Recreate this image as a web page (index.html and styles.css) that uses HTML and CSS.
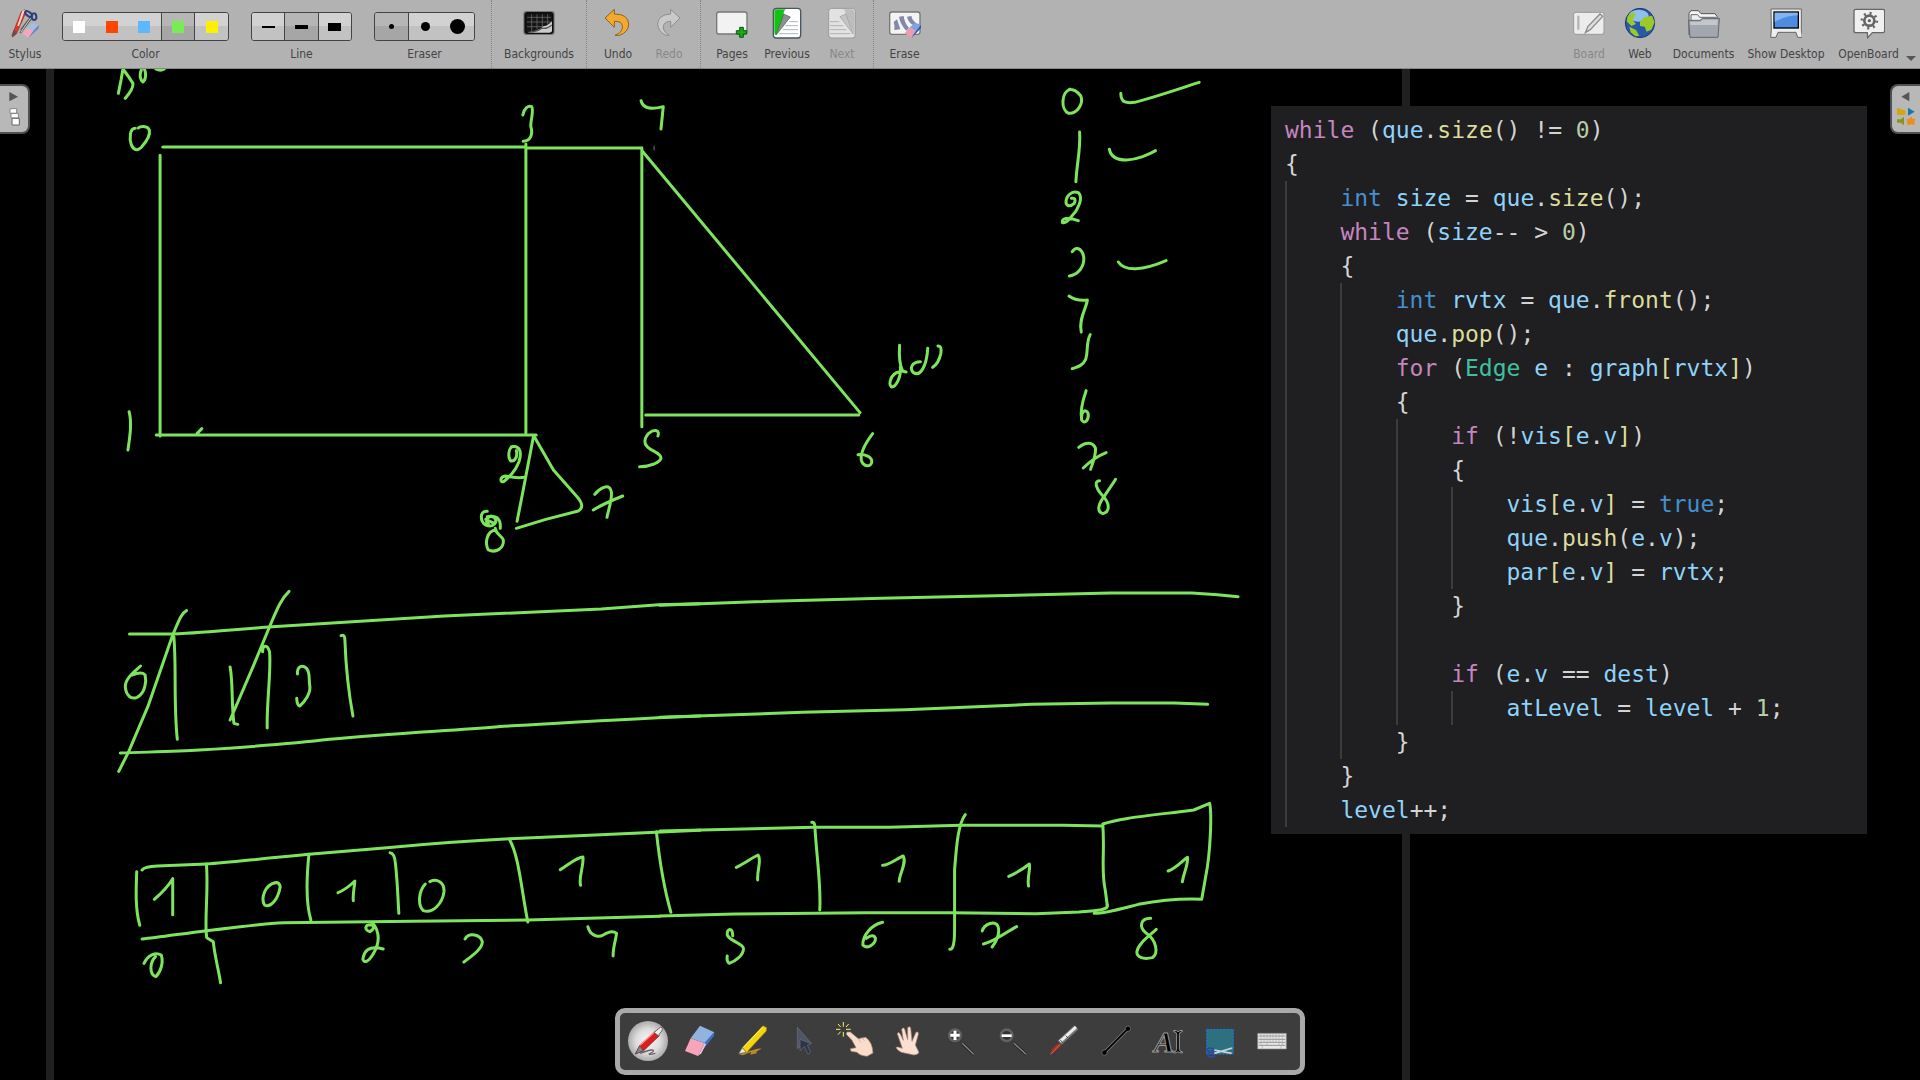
FILE: index.html
```html
<!DOCTYPE html>
<html lang="en">
<head>
<meta charset="utf-8">
<meta name="viewport" content="width=device-width, initial-scale=1">
<title>OpenBoard</title>
<link rel="stylesheet" href="styles.css">
</head>
<body>
<header class="toolbar">
  <button class="tool tool-stylus"><svg class="icon" viewBox="29 21 96 96"><path d="M38 106L66 35l10-6 5 5-30 68-12 9z" fill="#e33a28" stroke="#a32218" stroke-width="2"/><path d="M38 106l5-16 9 5-7 12z" fill="#555"/><path d="M69 32l8-3-18 50-5-2z" fill="#f4d4d0"/><path d="M62 99l36-47M65 90L98 47" stroke="#566050" stroke-width="6"/><path d="M64 97l30-43" stroke="#c8d0c4" stroke-width="3"/><ellipse cx="88" cy="42" rx="12" ry="6" transform="rotate(35 88 42)" fill="none" stroke="#2b3f80" stroke-width="6"/><ellipse cx="104" cy="50" rx="10" ry="7" transform="rotate(80 104 50)" fill="none" stroke="#2b3f80" stroke-width="6"/><path d="M70 101l12-18 20 10-15 21z" fill="#f5a6bd"/><path d="M82 83l16-13 21 4-17 19z" fill="#a6bede"/><path d="M102 93l17-19-2 12-30 28z" fill="#5f88c9"/></svg><span>Stylus</span></button>

  <div class="field" role="group" aria-label="Color">
    <div class="segments segments-five">
      <button aria-label="White"><i class="swatch white"></i></button><button aria-label="Red"><i class="swatch red"></i></button><button aria-label="Blue"><i class="swatch blue"></i></button><button class="on" aria-label="Green" aria-pressed="true"><i class="swatch green"></i></button><button aria-label="Yellow"><i class="swatch yellow"></i></button>
    </div>
    <span>Color</span>
  </div>
  <div class="field" role="group" aria-label="Line">
    <div class="segments">
      <button aria-label="Fine line"><i class="stroke fine"></i></button><button class="on" aria-label="Medium line" aria-pressed="true"><i class="stroke medium"></i></button><button aria-label="Strong line"><i class="stroke strong"></i></button>
    </div>
    <span>Line</span>
  </div>
  <div class="field" role="group" aria-label="Eraser">
    <div class="segments">
      <button class="on" aria-label="Small eraser" aria-pressed="true"><i class="dot small"></i></button><button aria-label="Medium eraser"><i class="dot mid"></i></button><button aria-label="Large eraser"><i class="dot large"></i></button>
    </div>
    <span>Eraser</span>
  </div>

  <div class="section section-backgrounds">
    <button class="tool"><svg class="icon" viewBox="129 21 96 96"><rect x="130" y="33" width="94" height="72" rx="9" fill="#777"/><rect x="135" y="38" width="84" height="62" rx="5" fill="#151515" stroke="#000" stroke-width="3"/><path d="M141 52h72M141 66h72M141 80h60M155 43v52M171 43v45M187 43v40M203 43v30" stroke="#777" stroke-width="2"/><path d="M142 98q36-6 50-20 8 2 24-14v30q-3 4-8 4z" fill="#ccc"/><path d="M145 97q30-2 40-12 18 2 30-10" stroke="#555" stroke-width="4" fill="none"/></svg><span>Backgrounds</span></button>
  </div>
  <div class="section section-history">
    <button class="tool"><svg class="icon" viewBox="366 21 96 96"><path d="M375 54l28-26v14q42 0 43 30 0 25-28 34h-13q25-10 22-29-2-14-24-13v18z" fill="#f4a82c" stroke="#8a651d" stroke-width="3"/></svg><span>Undo</span></button>
    <button class="tool" disabled><svg class="icon" viewBox="516 21 96 96"><path d="M597 54l-28-26v14q-38 2-39 30 1 23 25 34h10q-20-12-18-27 2-15 22-15v18z" fill="#c9c9c9" stroke="#8e8e8e" stroke-width="3"/></svg><span>Redo</span></button>
  </div>
  <div class="section section-pages">
    <button class="tool"><svg class="icon" viewBox="708 21 96 96"><rect x="710" y="36" width="91" height="66" rx="7" fill="#f2f2f2" stroke="#777" stroke-width="4"/><path d="M779 82h11v10h10v10h-10v10h-11v-10h-10V92h10z" fill="#18a818" stroke="#075d0b" stroke-width="3"/></svg><span>Pages</span></button>
    <button class="tool"><svg class="icon" viewBox="873 21 96 96"><rect x="880" y="25" width="82" height="89" rx="9" fill="#fff" stroke="#4b565f" stroke-width="4"/><path d="M883 28h36q-10 2-8 20l-23 58q-5-2-5-8z" fill="#13c313"/><path d="M911 42l20 9-42 53z" fill="#8b9290" stroke="#4d5755" stroke-width="2"/><path d="M928 65h26M916 77h38M908 89h46M897 101h57" stroke="#85939a" stroke-width="2"/></svg><span>Previous</span></button>
    <button class="tool" disabled><svg class="icon" viewBox="1038 21 96 96"><rect x="1046" y="25" width="80" height="89" rx="9" fill="#e2e2e2" stroke="#999" stroke-width="3"/><path d="M1088 28h28q8 2 8 10v66l-28-58q3-16-8-18z" fill="#bdbdbd"/><path d="M1080 50l17-8 23 61z" fill="#c5c5c5" stroke="#999" stroke-width="2"/><path d="M1050 65h28M1050 77h40M1050 89h49M1050 101h61" stroke="#999" stroke-width="2"/></svg><span>Next</span></button>
  </div>
  <div class="section section-erase">
    <button class="tool"><svg class="icon" viewBox="1228 21 96 96"><rect x="1230" y="36" width="91" height="67" rx="7" fill="#f4f4f4" stroke="#777" stroke-width="4"/><path d="M1242 66q4 12 2 24l18-2-10-30zM1258 50q4 24 22 42l8-8q-14-16-16-36zM1282 50q4 18 20 26l6-8q-14-12-12-20z" fill="#8289a8"/><path d="M1275 100l15-18 18 12-13 21z" fill="#f09ab0"/><path d="M1290 82l18-14 16 6-16 20z" fill="#86a0dc"/><path d="M1308 94l16-20v10l-29 31z" fill="#2b58b5"/></svg><span>Erase</span></button>
  </div>

  <nav class="modes" aria-label="Modes">
    <button class="tool mode-board" disabled><svg class="icon" viewBox="99 21 96 96"><rect x="101" y="37" width="91" height="66" rx="7" fill="#ececec" stroke="#999" stroke-width="3"/><path d="M115 47v42" stroke="#b5b5b5" stroke-width="7"/><path d="M136 98l8-19 36-37 8 7-37 40z" fill="#ddd" stroke="#8c8c8c" stroke-width="4"/></svg><span>Board</span></button>
    <button class="tool mode-web"><svg class="icon" viewBox="252 21 96 96"><circle cx="300" cy="69" r="44" fill="#2858a8" stroke="#1d3868" stroke-width="3"/><ellipse cx="296" cy="47" rx="30" ry="18" fill="#8fc0ec"/><path d="M263 48l16-12 8 8-9 16 10 12-14 6-14-14zM300 65l14-14 22-4 8 20-10 22-14 6-6-15-14-2zM268 80l20 10 10 17-12 2-14-12z" fill="#9ac928"/></svg><span>Web</span></button>
    <button class="tool mode-documents"><svg class="icon" viewBox="441 21 96 96"><path d="M444 104V40l6-8h22l8 9h42l6 8v53z" fill="#f5f5f5" stroke="#555" stroke-width="3"/><path d="M450 105V44h20l6 8h48v50" fill="#eee" stroke="#666" stroke-width="3"/><path d="M443 61h34l7-6h51l-4 57h-84z" fill="#a2a6ae" stroke="#62666d" stroke-width="3"/><path d="M447 65h32l7-6h44l-1 16h-81z" fill="#c4c7ce"/></svg><span>Documents</span></button>
    <button class="tool mode-desktop"><svg class="icon" viewBox="690 21 96 96"><path d="M693 27h91v62l3 23h-14l-5-15h-54l-6 15h-16l2-23z" fill="#eee" stroke="#666" stroke-width="3"/><rect x="702" y="36" width="73" height="48" fill="#4d8ce0" stroke="#000" stroke-width="4"/><path d="M704 66V38h69v8q-40 2-69 20z" fill="#83b4f0"/></svg><span>Show Desktop</span></button>
    <button class="tool mode-openboard"><svg class="icon" viewBox="938 21 96 96"><path d="M947 28h80q6 0 6 6v58q0 6-6 6h-31l-14 15-1-15h-34q-6 0-6-6V34q0-6 6-6z" fill="#f0f0f0" stroke="#666" stroke-width="4"/><circle cx="987" cy="62" r="15" fill="none" stroke="#666" stroke-width="8"/><circle cx="987" cy="62" r="22" fill="none" stroke="#666" stroke-width="9" stroke-dasharray="6 11.28"/><circle cx="987" cy="62" r="5" fill="#666"/></svg><span>OpenBoard</span></button>
    <svg class="more" viewBox="0 0 10 6"><path d="M0 0h10L5 5z" fill="#555"/></svg>
  </nav>
</header>

<main class="board">
  <div class="page-edge edge-left"></div>
  <div class="page-edge edge-right"></div>

  <svg class="ink" role="img" aria-label="Graph sketch with vertices 0 to 8, a queue and a visited array">
    <g transform="matrix(.38265 0 0 .33333 100 -9)">
      <path d="M60 27L55 60 48 100M62 30Q75 50 86 70Q88 85 66 115M108 30C102 45 106 62 112 66C120 60 121 40 116 27M146 27Q158 34 168 27"/>
      <path d="M92 205C78 205 76 235 82 255C90 275 100 270 108 262C125 240 132 225 129 210C124 196 105 198 100 204"/>
      <path d="M164 261H1113M1113 264H1416M157 286V1128M147 1125H1140M1113 252V1118M1416 263V1100M254 1120l12-14"/>
      <path d="M1105 165C1108 145 1120 135 1128 140C1135 150 1124 185 1126 200C1132 225 1125 242 1106 244"/>
      <path d="M1414 122C1418 145 1440 150 1472 140L1466 207"/>
      <path class="faint" d="M1448 258v12"/>
      <path d="M76 1055C84 1090 78 1130 73 1170"/>
      <path d="M1458 1128C1464 1112 1450 1105 1434 1120C1415 1145 1425 1160 1445 1172C1475 1190 1470 1200 1448 1212Q1430 1220 1410 1220"/>
      <path d="M1078 1160C1066 1165 1066 1195 1074 1203C1084 1205 1092 1190 1088 1172M1075 1160C1100 1155 1102 1180 1095 1205C1085 1235 1070 1250 1055 1265C1045 1268 1044 1250 1060 1248Q1085 1255 1110 1252"/>
      <path d="M1133 1128L1106 1290L1090 1384M1135 1130L1185 1230L1245 1308Q1270 1340 1250 1353L1165 1378L1088 1405"/>
      <path d="M1293 1303C1305 1285 1330 1270 1335 1290C1342 1310 1328 1350 1325 1372M1289 1350C1310 1335 1340 1320 1366 1308"/>
      <path d="M1012 1354C990 1352 994 1385 1008 1395C1030 1405 1040 1385 1030 1372C1015 1362 1003 1385 1015 1392M1012 1370C1040 1365 1048 1380 1046 1405M1035 1410C1010 1412 1005 1450 1015 1470C1035 1480 1056 1465 1054 1440C1050 1425 1035 1425 1033 1405M1008 1378L1030 1390"/>
    </g>
    <g transform="matrix(.40816 0 0 .33333 600 -9)">
      <path d="M105 275L637 1058M112 1065H634"/>
      <path d="M668 1121C650 1150 638 1180 640 1200C645 1222 665 1222 666 1205C666 1190 650 1182 632 1184"/>
      <path d="M734 856C732 890 734 915 742 934L750 936M736 920C738 950 726 982 714 981C706 972 712 942 732 936M785 905C765 905 757 925 768 938C785 950 800 920 803 865M828 858Q838 856 835 880Q830 910 815 922"/>
      <path d="M1152 88C1130 95 1128 150 1148 160C1170 162 1185 130 1178 108C1170 95 1160 88 1150 88M1276 100C1276 128 1288 130 1310 127C1350 115 1410 90 1468 67"/>
      <path d="M1175 216C1178 270 1168 310 1166 365M1248 268C1252 292 1268 300 1290 300C1320 298 1340 285 1361 272"/>
      <path d="M1155 415Q1168 412 1162 430Q1148 445 1142 430C1140 410 1155 390 1172 398C1182 410 1175 435 1165 455C1150 475 1145 490 1133 488C1130 475 1145 470 1172 482"/>
      <path d="M1157 575C1165 560 1180 562 1185 590C1188 620 1170 645 1150 648M1270 606C1285 635 1330 632 1387 602"/>
      <path d="M1149 708C1165 722 1180 722 1194 720C1192 745 1172 775 1179 816M1201 824C1190 850 1197 870 1190 898C1182 918 1170 920 1157 926"/>
      <path d="M1191 992C1180 1030 1177 1060 1180 1080C1188 1095 1198 1080 1196 1060C1190 1045 1180 1055 1180 1070"/>
      <path d="M1173 1162C1190 1145 1208 1145 1214 1165C1215 1190 1205 1215 1202 1228M1184 1224C1200 1205 1220 1188 1240 1178"/>
      <path d="M1224 1262C1210 1262 1215 1285 1230 1305C1250 1330 1250 1355 1232 1361C1215 1355 1222 1330 1236 1308C1245 1290 1255 1275 1263 1258"/>
    </g>
    <g transform="matrix(.38265 0 0 .33333 100 501)">
      <path d="M77 192H190C280 188 340 180 440 171C600 160 750 148 900 138L1310 117L1460 104L1568 101M53 549C120 546 200 545 260 540C400 530 500 522 600 508C760 490 900 483 1040 470C1200 460 1400 445 1568 438"/>
      <path d="M226 122C212 130 205 155 190 195L125 410L75 545L49 604M193 200C200 290 192 400 202 508"/>
      <path d="M106 288C90 305 66 325 66 350C68 375 80 390 97 382C118 370 122 335 118 315C110 305 95 310 85 315"/>
      <path d="M494 64C475 85 465 110 445 165L400 290L340 450M340 291C348 340 343 400 350 460l10 3M425 245C425 225 437 222 443 245C448 300 435 400 437 474"/>
      <path d="M516 312C515 285 530 285 540 295C550 310 545 325 548 345C552 370 535 395 522 408Q515 405 514 385M630 197Q640 192 640 210C643 310 650 370 661 438"/>
      <path d="M110 900Q115 890 150 888L278 882C340 878 400 868 546 853L750 833C850 822 1000 810 1070 806L1250 797L1568 781M110 1107C150 1103 220 1090 278 1082C350 1075 420 1060 480 1058C700 1055 900 1053 1118 1050L1463 1039"/>
      <path d="M96 905C94 960 92 1020 104 1066M278 882C284 960 272 1060 279 1103L296 1115C300 1160 310 1200 315 1238M546 853C540 920 538 1000 551 1050M758 848Q770 850 772 880C778 940 778 980 781 1030M1070 808C1095 860 1100 950 1118 1056M1454 785C1462 870 1475 960 1492 1027"/>
      <path d="M142 988C160 970 175 955 190 926V1034M458 938C430 945 420 985 430 1005C445 1015 465 990 471 950Q468 935 456 938M622 968C640 960 655 945 666 933C665 950 660 975 662 992"/>
      <path d="M850 942C832 965 830 1005 845 1022C870 1032 895 1000 899 965C900 935 880 925 862 935M1203 899C1225 885 1240 865 1262 861C1265 890 1250 920 1256 946"/>
      <path d="M115 1180C125 1155 145 1145 160 1155C166 1175 160 1205 146 1220C130 1215 128 1180 145 1160M715 1065C690 1060 690 1080 705 1085C720 1075 715 1062 708 1065M715 1062C732 1090 730 1120 715 1150C700 1180 690 1178 687 1168C690 1145 700 1125 740 1137"/>
      <path d="M954 1107C965 1085 995 1095 999 1115C1000 1135 975 1155 951 1176M1275 1070C1280 1095 1300 1105 1315 1095C1335 1080 1345 1085 1350 1090C1348 1110 1340 1135 1341 1158"/>
    </g>
    <g transform="matrix(.39541 0 0 .33333 660 501)">
      <path d="M0 106L240 95L560 85L1140 69H1345L1410 74L1462 80M0 442L360 427L620 419L940 403L1140 399H1300L1385 403"/>
      <path d="M0 783L390 772H580L760 766H1020L1120 768M0 1038L190 1032L520 1028H740L950 1031L1060 1026L1098 1022Q1135 1018 1131 1005"/>
      <path d="M384 757Q392 755 392 775C396 860 408 950 404 1020M772 734C755 760 750 820 745 900V1080Q745 1140 733 1138M1120 768C1125 850 1115 900 1126 960L1131 1005"/>
      <path d="M1120 762C1160 745 1230 738 1350 720L1390 700C1396 730 1392 850 1380 920L1370 988C1310 985 1260 992 1210 1003C1170 1015 1130 1030 1098 1030"/>
      <path d="M193 892C215 880 230 865 248 855C258 870 245 900 247 930M563 886C580 885 600 865 615 858C625 880 605 910 605 934M882 919C900 910 920 895 934 882C938 895 928 920 932 948M1285 903C1305 895 1318 875 1334 862C1336 885 1325 905 1321 935"/>
      <path d="M184 1097C184 1070 168 1075 170 1095C178 1115 210 1120 211 1135C212 1155 190 1175 175 1180Q168 1175 170 1158"/>
      <path d="M563 1057C535 1065 512 1095 513 1125C522 1138 545 1125 545 1105Q540 1090 522 1105"/>
      <path d="M815 1083C820 1060 850 1050 855 1070C860 1090 850 1115 840 1131M818 1122C845 1115 870 1090 902 1070"/>
      <path d="M1241 1045C1215 1045 1210 1070 1230 1090C1255 1110 1262 1150 1245 1163C1220 1170 1205 1160 1206 1145C1210 1120 1235 1100 1255 1078"/>
    </g>
  </svg>

  <div class="snippet"><code>
    <div class="line"><b class="k">while</b> (<b class="v">que</b>.<b class="f">size</b>() != <b class="n">0</b>)</div>
    <div class="line">{</div>
    <div class="block">
      <div class="line"><b class="t">int</b> <b class="v">size</b> = <b class="v">que</b>.<b class="f">size</b>();</div>
      <div class="line"><b class="k">while</b> (<b class="v">size</b>-- &gt; <b class="n">0</b>)</div>
      <div class="line">{</div>
      <div class="block">
        <div class="line"><b class="t">int</b> <b class="v">rvtx</b> = <b class="v">que</b>.<b class="f">front</b>();</div>
        <div class="line"><b class="v">que</b>.<b class="f">pop</b>();</div>
        <div class="line"><b class="k">for</b> (<b class="c">Edge</b> <b class="v">e</b> : <b class="v">graph</b><b class="f">[</b><b class="v">rvtx</b><b class="f">]</b>)</div>
        <div class="line">{</div>
        <div class="block">
          <div class="line"><b class="k">if</b> (!<b class="v">vis</b><b class="f">[</b><b class="v">e</b>.<b class="v">v</b><b class="f">]</b>)</div>
          <div class="line">{</div>
          <div class="block">
            <div class="line"><b class="v">vis</b><b class="f">[</b><b class="v">e</b>.<b class="v">v</b><b class="f">]</b> = <b class="t">true</b>;</div>
            <div class="line"><b class="v">que</b>.<b class="f">push</b>(<b class="v">e</b>.<b class="v">v</b>);</div>
            <div class="line"><b class="v">par</b><b class="f">[</b><b class="v">e</b>.<b class="v">v</b><b class="f">]</b> = <b class="v">rvtx</b>;</div>
          </div>
          <div class="line">}</div>
          <div class="line"></div>
          <div class="line"><b class="k">if</b> (<b class="v">e</b>.<b class="v">v</b> == <b class="v">dest</b>)</div>
          <div class="block">
            <div class="line"><b class="v">atLevel</b> = <b class="v">level</b> + <b class="n">1</b>;</div>
          </div>
        </div>
        <div class="line">}</div>
      </div>
      <div class="line">}</div>
      <div class="line"><b class="v">level</b>++;</div>
    </div>
  </code></div>

  <button class="tab tab-left" aria-label="Pages panel"><svg viewBox="0 0 90 150"><path d="M28 24l26 14-26 14z" fill="#555"/><path d="M30 74h20v14H30zM33 88h22v14H33z" fill="#fff" stroke="#888" stroke-width="3"/><path d="M36 103h22v20H36z" fill="#fff" stroke="#666" stroke-width="3"/></svg></button>
  <button class="tab tab-right" aria-label="Library panel"><svg viewBox="0 0 90 150"><path d="M58 24L34 38l24 14z" fill="#555"/><path d="M21 73h10l3 4h12v16H21z" fill="#d5a70c"/><path d="M54 71l20 12-20 12z" fill="#1678a5"/><path d="M42 98v26l-10-8H21v-10h11z" fill="#8d941e"/><path d="M63 97l4 7 10 1-4 8 2 10-12-2-11 3v-10l-3-8 9-2z" fill="#ef8b18"/></svg></button>

  <div class="palette" role="toolbar" aria-label="Board tools">
    <button aria-label="Pen" aria-pressed="true"><svg viewBox="84 93 120 120"><defs><radialGradient id="disc"><stop offset="0" stop-color="#f8f8f8"/><stop offset=".6" stop-color="#ddd"/><stop offset="1" stop-color="#aaa"/></radialGradient></defs><circle cx="144" cy="153" r="60" fill="url(#disc)"/><path d="M120 190q50-18 38-4-24 12 8 4" fill="none" stroke="#666" stroke-width="4"/><path d="M106 192l13-25 45-42 14 12-47 45z" fill="#d82020" stroke="#8e1717" stroke-width="2"/><path d="M106 192l13-25 11 15z" fill="#888" stroke="#444" stroke-width="2"/><path d="M120 166l48-44" stroke="#ff8a80" stroke-width="4"/><path d="M162 127l19-15q8-2 6 8l-12 17z" fill="#eee" stroke="#666" stroke-width="3"/></svg></button>
    <button aria-label="Eraser"><svg viewBox="240 93 120 120"><path d="M255 183l17-38 42 14-20 39z" fill="#f7a4b8"/><path d="M272 145l28-38 43 20-29 32z" fill="#91b3df"/><path d="M343 127l-1 10-48 61 20-39z" fill="#3c6dd8"/><path d="M314 159l-20 39 10-8 14-27z" fill="#f7c5cf"/></svg></button>
    <button aria-label="Highlighter"><svg viewBox="399 93 120 120"><path d="M420 193q60-20 68-17-22 10-14 14l-20 4 2-8-24 10z" fill="#b98a25"/><path d="M430 173l62-66 11 6-1 10-60 65z" fill="#f3d413" stroke="#9b7c05" stroke-width="2"/><path d="M433 172l58-61" stroke="#fff47a" stroke-width="3"/><path d="M419 191l11-18 12 14z" fill="#e7e7e7" stroke="#6e6e45" stroke-width="2"/></svg></button>
    <button aria-label="Select"><svg viewBox="552 93 120 120"><path d="M592 112l42 48-18 1-24 15z" fill="#505565" stroke="#6c7180" stroke-width="2"/><path d="M600 148l34 13-12 5 10 20-8 7-11-23-13 12z" fill="#2f3545" stroke="#69738c" stroke-width="2"/></svg></button>
    <button aria-label="Interact"><svg viewBox="705 93 120 120"><path d="M738 126l10 0 24 20 22-4q20 14 22 47l-18 10q-22-2-30-12l-18-3-2-8 17-3-12-22-17-18z" fill="#fadccb" stroke="#a68472" stroke-width="2"/><path d="M772 146l8 12M783 142l7 10" stroke="#caa08c" stroke-width="2"/><path d="M727 96v14M727 126v14M704 118h14M735 118h14M711 102l8 9M743 102l-8 9M711 134l8-9" stroke="#fff06a" stroke-width="3"/></svg></button>
    <button aria-label="Hand"><svg viewBox="864 93 120 120"><path d="M904 187q-14-7-16-15l6-1 13 4-15-44q3-7 8 0l10 20-5-33q5-9 9 0l9 31 0-36q6-6 9 1l4 40 12-27q8-4 7 6l-9 32 10 20q3 7-14 10z" fill="#fbdfd0" stroke="#a48575" stroke-width="2"/></svg></button>
    <button aria-label="Zoom in"><svg viewBox="-2 93 120 120"><circle cx="43" cy="136" r="21" fill="#626262"/><circle cx="43" cy="136" r="13" fill="#333"/><path d="M43 122v28M29 136h28" stroke="#fff" stroke-width="9"/><path d="M65 160l34 33" stroke="#222" stroke-width="9"/><path d="M65 160l34 33" stroke="#888" stroke-width="4"/></svg></button>
    <button aria-label="Zoom out"><svg viewBox="155 93 120 120"><circle cx="199" cy="136" r="21" fill="#626262"/><circle cx="199" cy="136" r="13" fill="#333"/><path d="M184 137h30" stroke="#fff" stroke-width="8"/><path d="M221 160l36 33" stroke="#222" stroke-width="9"/><path d="M221 160l36 33" stroke="#888" stroke-width="4"/></svg></button>
    <button aria-label="Laser pointer"><svg viewBox="313 93 120 120"><path d="M331 195l6-18 20-18 8 8-22 20z" fill="#a83028"/><path d="M333 193l28-30" stroke="#e0604c" stroke-width="3"/><path d="M360 158l50-46" stroke="#777" stroke-width="17"/><path d="M361 155l48-44" stroke="#eee" stroke-width="9"/><path d="M362 150l12 13M378 137l12 12" stroke="#555" stroke-width="3"/></svg></button>
    <button aria-label="Line"><svg viewBox="466 93 120 120"><path d="M491 188l71-72" stroke="#888" stroke-width="10"/><g fill="#000" stroke="#888" stroke-width="2"><circle cx="491" cy="188" r="8"/><circle cx="562" cy="116" r="8"/></g><path d="M491 188l71-72" stroke="#000" stroke-width="6"/></svg></button>
    <button aria-label="Text"><svg viewBox="625 93 120 120"><path d="M702 121q10 0 13 4 4-4 13-4v4q-9 0-9 8v45q0 7 9 7v4q-9 0-13-4-4 4-13 4v-4q9 0 9-7v-45q0-8-9-8z" fill="#000" stroke="#999" stroke-width="3"/><text class="letter-tool" x="643" y="185">A</text></svg></button>
    <button aria-label="Capture"><svg viewBox="781 93 120 120"><path d="M801 118h80v74h-80z" fill="#2d7180" stroke="#1679e8" stroke-width="3" stroke-dasharray="6 4"/><g fill="none" stroke="#294ba0" stroke-width="5"><ellipse cx="815" cy="194" rx="10" ry="7"/><ellipse cx="812" cy="179" rx="9" ry="5"/></g><path d="M824 190l54-16M824 180l52 10" stroke="#ccd3d7" stroke-width="5"/></svg></button>
    <button aria-label="Keyboard"><svg viewBox="937 93 120 120"><path d="M954 130h86v47h-86z" fill="#e8e8e8" stroke="#888" stroke-width="2"/><path d="M957 138h80M957 148h80M957 157h80M957 166h80" stroke="#666" stroke-width="2"/><path d="M964 131v35M973 131v26M982 131v35M991 131v26M1000 131v26M1009 131v26M1018 131v35M1028 131v35M968 166v10M1024 166v10" stroke="#aaa" stroke-width="2"/></svg></button>
  </div>
</main>
</body>
</html>
```
FILE: styles.css
```css
* { box-sizing: border-box; }

body {
  margin: 0;
  min-height: 100vh;
  display: flex;
  flex-direction: column;
  background: #000;
  color: #444;
  font: 12px/16px "DejaVu Sans Condensed", "DejaVu Sans", sans-serif;
}

button {
  margin: 0;
  padding: 0;
  border: 0;
  background: none;
  color: inherit;
  font: inherit;
}

.toolbar {
  display: flex;
  height: 69px;
  background: #b2b2b2;
  border-bottom: 1px solid #888;
  white-space: nowrap;
}

.tool,
.field {
  display: flex;
  flex-direction: column;
  align-items: center;
  justify-content: flex-end;
  padding-bottom: 6px;
}

.tool { gap: 7px; }
.tool:disabled { color: #888; }
.tool-stylus { width: 50px; }
.icon { display: block; width: 32px; height: 32px; }

.field { gap: 5px; margin-left: 12px; }
.field + .field { margin-left: 22px; }

.segments {
  display: flex;
  width: 101px;
  height: 29px;
  border: 1px solid #444;
  border-radius: 3px;
  overflow: hidden;
}
.segments-five { width: 167px; }
.segments button {
  flex: 1;
  display: grid;
  place-items: center;
  background: linear-gradient(#d2d2d2 0 50%, #c2c2c2 50% 100%);
}
.segments .on {
  background: linear-gradient(#b6b6b6 0 50%, #a6a6a6 50% 100%);
  border-left: 1px solid #444;
  border-right: 1px solid #444;
}
.segments .on:first-child { border-left: 0; }

.swatch { width: 12px; height: 12px; }
.white { background: #fff; }
.red { background: #ff4500; }
.blue { background: #5eb8ff; }
.green { background: #7aea55; }
.yellow { background: #fff000; }

.stroke { width: 13px; background: #000; }
.fine { height: 2px; }
.medium { height: 4px; }
.strong { height: 8px; }

.dot { border-radius: 50%; background: #000; }
.small { width: 5px; height: 5px; }
.mid { width: 9px; height: 9px; }
.large { width: 15px; height: 15px; }

.section {
  display: flex;
  justify-content: center;
  border-left: 1px dotted #858585;
}
.section-backgrounds { width: 95px; margin-left: 16px; }
.section-history { width: 114px; }
.section-history .tool { width: 51px; }
.section-pages { width: 173px; }
.section-pages .tool { width: 55px; }
.section-erase { width: 62px; }

.modes {
  display: flex;
  margin-left: auto;
}
.mode-board { width: 50px; }
.mode-web { width: 52px; }
.mode-documents { width: 75px; }
.mode-desktop { width: 90px; }
.mode-openboard { width: 75px; }
.more { width: 10px; height: 6px; margin: auto 4px 6px 0; }

.board {
  position: relative;
  flex: 1;
  min-height: 800px;
  overflow: hidden;
}

.page-edge {
  position: absolute;
  top: 0;
  bottom: 0;
  width: 8px;
  background: #202020;
}
.edge-left { left: 46px; }
.edge-right { left: 1402px; }

.ink {
  position: absolute;
  inset: 0;
  width: 100%;
  height: 100%;
}
.ink path {
  fill: none;
  stroke: #7ee45e;
  stroke-width: 3px;
  stroke-linecap: round;
  stroke-linejoin: round;
  vector-effect: non-scaling-stroke;
}
.ink .faint { stroke: #777; stroke-width: 1px; }

.snippet {
  position: absolute;
  left: 1271px;
  top: 37px;
  width: 596px;
  padding: 7px 14px;
  background: #1f1e20;
  color: #d4d4d4;
}
.snippet code {
  display: block;
  font: 23px/34px "DejaVu Sans Mono", "Liberation Mono", monospace;
}
.line { height: 34px; white-space: pre; }
.block {
  padding-left: 4ch;
  background: linear-gradient(#3c3c3c, #3c3c3c) left / 2px 100% no-repeat;
}
.snippet b { font-weight: normal; }
.k { color: #c586c0; }
.v { color: #8fd3fb; }
.f { color: #dcdc9d; }
.t { color: #4490d0; }
.c { color: #3fc0a0; }
.n { color: #b5cea8; }

.tab {
  position: absolute;
  top: 15px;
  width: 30px;
  height: 50px;
  background: #b8b8b8;
  border: 2px solid #505050;
}
.tab svg { display: block; width: 30px; height: 50px; margin: -2px; }
.tab-left { left: 0; border-left: 0; border-radius: 0 8px 8px 0; }
.tab-left svg { margin-left: 0; }
.tab-right { right: 0; border-right: 0; border-radius: 8px 0 0 8px; }

.palette {
  position: absolute;
  left: 50%;
  bottom: 5px;
  display: flex;
  padding: 7px 2px 9px;
  transform: translateX(-50%);
  background: #3d3d3d;
  border: 5px solid #a9a9a9;
  border-radius: 10px;
}
.palette button { width: 52px; height: 41px; display: grid; place-items: center; }
.palette svg { width: 40px; height: 40px; }
.letter-tool {
  font: italic bold 90px "Liberation Serif", serif;
  fill: #000;
  stroke: #999;
  stroke-width: 3px;
}
```
